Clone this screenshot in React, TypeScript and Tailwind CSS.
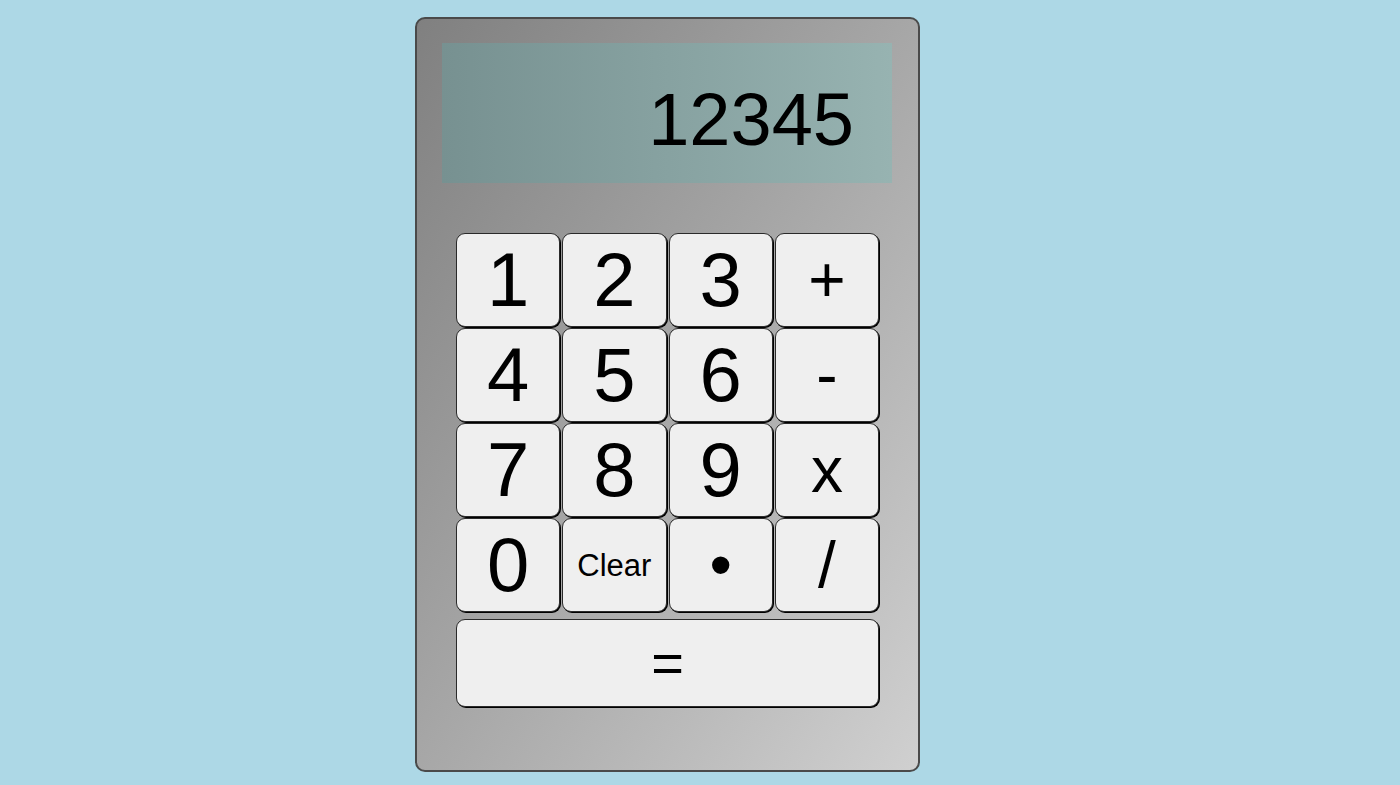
import React from "react";

const keys: { label: string; cls: string }[] = [
  { label: "1", cls: "text-[76px]" },
  { label: "2", cls: "text-[76px]" },
  { label: "3", cls: "text-[76px]" },
  { label: "+", cls: "text-[64px]" },
  { label: "4", cls: "text-[76px]" },
  { label: "5", cls: "text-[76px]" },
  { label: "6", cls: "text-[76px]" },
  { label: "-", cls: "text-[64px]" },
  { label: "7", cls: "text-[76px]" },
  { label: "8", cls: "text-[76px]" },
  { label: "9", cls: "text-[76px]" },
  { label: "x", cls: "text-[64px]" },
  { label: "0", cls: "text-[76px]" },
  { label: "Clear", cls: "text-[31px]" },
  { label: "•", cls: "text-[64px]" },
  { label: "/", cls: "text-[64px]" },
];

export default function App() {
  return (
    <div
      className="w-full h-[785px] bg-[#add8e6] pt-[17px] pl-[415px] overflow-hidden"
      style={{ fontFamily: '"Liberation Sans", Arial, sans-serif' }}
    >
      <div className="w-[505px] h-[755px] rounded-[10px] border-2 border-[#4a4a4a] bg-gradient-to-br from-[#808080] to-[#d0d0d0] pt-[24px] pl-[25px]">
        <div className="w-[450px] h-[140px] bg-gradient-to-r from-[#779191] to-[#97b3b1] flex items-center justify-end pr-[38px] pt-[14px]">
          <span className="text-[74px] leading-none text-black">12345</span>
        </div>
        <div className="mt-[50px] ml-[14px] w-[423px]">
          <div className="grid grid-cols-4 gap-x-[2px] gap-y-[1px]">
            {keys.map((k) => (
              <button
                key={k.label}
                className={`h-[94px] rounded-[9px] bg-[#efefef] border border-[#2a2a2a] shadow-[1px_1px_0_#000] flex items-center justify-center leading-none text-black ${k.cls}`}
              >
                {k.label}
              </button>
            ))}
          </div>
          <button className="mt-[7px] w-full h-[88px] rounded-[9px] bg-[#efefef] border border-[#2a2a2a] shadow-[1px_1px_0_#000] flex items-center justify-center leading-none text-black text-[56px]">
            =
          </button>
        </div>
      </div>
    </div>
  );
}
